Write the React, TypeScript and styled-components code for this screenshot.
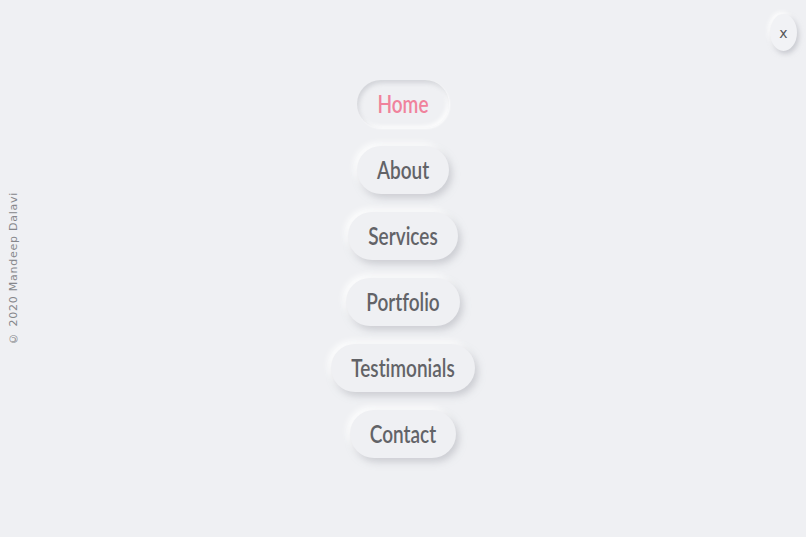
import React from "react";
import styled, { createGlobalStyle, css } from "styled-components";

const Global = createGlobalStyle`
  html, body { margin: 0; padding: 0; background: #eff0f3; }
  #root { height: 100vh; }
  * { box-sizing: border-box; }
`;

const Page = styled.div`
  height: 100vh;
  display: grid;
  grid-template-columns: 44px 1fr 44px;
  background: #eff0f3;
  font-family: "Lato", "Noto Sans", sans-serif;
`;

const Side = styled.aside`
  display: flex;
  align-items: center;
  padding-left: 8px;
`;

const Copy = styled.span`
  writing-mode: vertical-rl;
  transform: rotate(180deg);
  font-family: "DejaVu Sans", "Noto Sans", sans-serif;
  font-size: 11px;
  line-height: 11px;
  letter-spacing: 0.75px;
  color: #86878b;
  white-space: nowrap;
`;

const Nav = styled.nav`
  display: flex;
  flex-direction: column;
  align-items: center;
  justify-content: center;
  gap: 18px;
`;

const Item = styled.a<{ $active?: boolean }>`
  height: 48px;
  padding: 0 20px;
  border-radius: 24px;
  display: flex;
  align-items: center;
  justify-content: center;
  background: #eff0f3;
  color: #626367;
  text-decoration: none;
  cursor: pointer;
  box-shadow: 3px 4px 7px rgba(170, 172, 180, 0.5),
    -3px -3px 6px rgba(255, 255, 255, 0.95);
  ${(p) =>
    p.$active &&
    css`
      color: #f0829c;
      box-shadow: inset 2px 3px 4px rgba(170, 172, 180, 0.4),
        inset -2px -2px 4px rgba(255, 255, 255, 0.9),
        1px 1px 2px rgba(255, 255, 255, 0.8);
    `}
`;

const Label = styled.span`
  display: inline-block;
  font-size: 19px;
  font-weight: 600;
  letter-spacing: 0;
  font-variant-ligatures: none;
  font-feature-settings: "liga" 0, "clig" 0;
  transform: scaleY(1.3);
  line-height: 1;
`;

const Corner = styled.div`
  display: flex;
  justify-content: flex-end;
  align-items: flex-start;
  padding: 14px 9px 0 0;
`;

const Close = styled.button`
  width: 27px;
  height: 37px;
  border: none;
  border-radius: 50%;
  background: #f1f2f5;
  color: #55565a;
  font-family: "DejaVu Sans", sans-serif;
  font-size: 14px;
  padding: 0;
  cursor: pointer;
  display: flex;
  align-items: center;
  justify-content: center;
  box-shadow: 2px 3px 5px rgba(170, 172, 180, 0.55),
    -2px -2px 4px rgba(255, 255, 255, 0.95);
`;

const links = ["Home", "About", "Services", "Portfolio", "Testimonials", "Contact"];

export default function App() {
  return (
    <>
      <Global />
      <Page>
        <Side>
          <Copy>© 2020 Mandeep Dalavi</Copy>
        </Side>
        <Nav>
          {links.map((l, i) => (
            <Item key={l} $active={i === 0}>
              <Label>{l}</Label>
            </Item>
          ))}
        </Nav>
        <Corner>
          <Close aria-label="close">x</Close>
        </Corner>
      </Page>
    </>
  );
}
